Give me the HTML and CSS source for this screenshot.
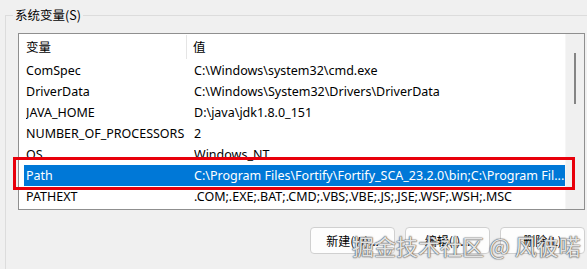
FILE: index.html
```html
<!DOCTYPE html>
<html lang="zh-CN">
<head>
<meta charset="utf-8">
<title>系统变量</title>
<link rel="stylesheet" href="styles.css">
</head>
<body>
<div class="group">
  <div class="legend">系统变量(S)</div>
  <div class="list">
    <div class="table">
      <div class="head">
        <div class="hcell name">变量</div>
        <div class="hcell value">值</div>
      </div>
      <div class="row"><span>ComSpec</span><span>C:\Windows\system32\cmd.exe</span></div>
      <div class="row"><span>DriverData</span><span>C:\Windows\System32\Drivers\DriverData</span></div>
      <div class="row"><span>JAVA_HOME</span><span>D:\java\jdk1.8.0_151</span></div>
      <div class="row"><span>NUMBER_OF_PROCESSORS</span><span>2</span></div>
      <div class="row"><span>OS</span><span>Windows_NT</span></div>
      <div class="row selected"><span>Path</span><span>C:\Program Files\Fortify\Fortify_SCA_23.2.0\bin;C:\Program Fil...</span><i class="mark"></i></div>
      <div class="row"><span>PATHEXT</span><span>.COM;.EXE;.BAT;.CMD;.VBS;.VBE;.JS;.JSE;.WSF;.WSH;.MSC</span></div>
    </div>
    <div class="scrollbar"><div class="thumb"></div></div>
  </div>
  <div class="buttons">
    <button class="btn">新建(W)...</button>
    <button class="btn">编辑(I)...</button>
    <button class="btn">删除(L)</button>
  </div>
  <div class="watermark">掘金技术社区 @ 风彼喏</div>
</div>
</body>
</html>
```

FILE: styles.css
```css
html, body {
  margin: 0;
  padding: 0;
  background: #f0f0f0;
  width: 587px;
  height: 269px;
  overflow: hidden;
  font-family: "Noto Sans", "Noto Sans CJK SC", sans-serif;
  font-size: 12px;
  color: #000;
}

.group {
  position: relative;
  margin: 15px 0 0 5px;
  border-top: 1px solid #dcdcdc;
  border-left: 1px solid #dcdcdc;
  padding: 17px 0 0 12px;
  height: 260px;
  box-sizing: border-box;
}

.legend {
  position: absolute;
  top: -9px;
  left: 7px;
  padding: 0 2px;
  background: #f0f0f0;
  line-height: 16px;
  font-size: 12.5px;
  font-family: "Noto Sans CJK SC", sans-serif;
}

.list {
  position: relative;
  width: 567px;
  height: 177px;
  box-sizing: border-box;
  border: 1px solid #8f8f8f;
  background: #fff;
  display: flex;
}

.table {
  flex: 1;
  min-width: 0;
}

.head {
  display: flex;
  height: 26px;
  align-items: center;
}

.hcell {
  font-family: "Noto Sans CJK SC", sans-serif;
  font-size: 12.5px;
  line-height: 24px;
}

.hcell.name {
  width: 160px;
  padding-left: 7px;
  border-right: 1px solid #e5e5e5;
}

.hcell.value {
  padding-left: 6px;
}

.row {
  position: relative;
  display: grid;
  grid-template-columns: 168px 1fr;
  height: 21px;
  line-height: 21px;
  margin-left: 5px;
  padding-left: 2px;
  white-space: nowrap;
  font-size: 12.5px;
}

.row span {
  overflow: hidden;
}

.row.selected {
  background: #0078d7;
  color: #fff;
}

.mark {
  position: absolute;
  left: -11px;
  right: -10px;
  top: -8px;
  bottom: -4px;
  border: 3px solid #e8000b;
  z-index: 2;
}

.scrollbar {
  width: 19px;
  background: #f0f0f0;
  border-left: 1px solid #f6f6f6;
  box-sizing: border-box;
  padding: 19px 0 0 8px;
}

.thumb {
  width: 2px;
  height: 51px;
  background: #858585;
}

.buttons {
  display: flex;
  gap: 10px;
  justify-content: flex-end;
  width: 567px;
  margin-top: 17px;
}

.btn {
  width: 85px;
  height: 27px;
  border: 1px solid #d0d0d0;
  border-radius: 4px;
  background: #fdfdfd;
  font-family: "Noto Sans CJK SC", sans-serif;
  font-size: 12px;
  color: #000;
  padding: 0;
}

.watermark {
  position: absolute;
  left: 346px;
  top: 213px;
  font-family: "Noto Sans CJK SC", sans-serif;
  font-size: 22px;
  white-space: nowrap;
  color: rgba(255, 255, 255, 0.85);
  text-shadow: 0 0 1px rgba(70, 70, 70, 0.9), 0 0 1px rgba(70, 70, 70, 0.9), 0 0 2px rgba(70, 70, 70, 0.6);
  z-index: 3;
}
```
